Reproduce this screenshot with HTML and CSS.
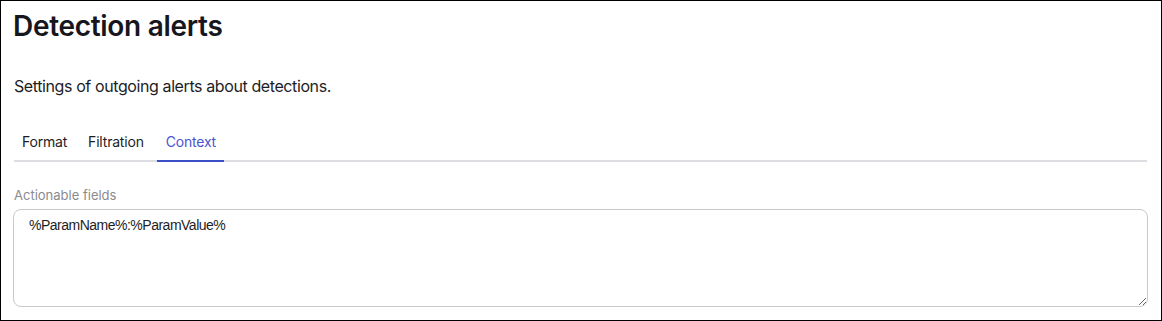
FILE: index.html
```html
<!DOCTYPE html>
<html lang="en">
<head>
<meta charset="utf-8">
<title>Detection alerts</title>
<link rel="stylesheet" href="styles.css">
</head>
<body>
<div class="page">
  <h1 class="title">Detection alerts</h1>
  <p class="subtitle">Settings of outgoing alerts about detections.</p>
  <nav class="tabs">
    <a class="tab">Format</a>
    <a class="tab">Filtration</a>
    <a class="tab tab-active">Context</a>
  </nav>
  <label class="field-label" for="fields">Actionable fields</label>
  <textarea id="fields" class="field-input">%ParamName%:%ParamValue%</textarea>
</div>
</body>
</html>
```
FILE: styles.css
```css
* { box-sizing: border-box; }
html, body { margin: 0; padding: 0; background: #fff; }
body { font-family: Inter, "Noto Sans", sans-serif; color: #1d1d25; }
.page {
  width: 1162px;
  height: 321px;
  border: 1px solid #000;
  padding: 7px 14px 0 12px;
  display: flex;
  flex-direction: column;
}
.title {
  margin: 0;
  font-size: 28px;
  line-height: 36px;
  font-weight: 600;
  letter-spacing: -0.3px;
  color: #16161e;
}
.subtitle {
  margin: 32px 0 0 1px;
  font-size: 16px;
  line-height: 20px;
  font-weight: 400;
  letter-spacing: -0.4px;
  color: #1d1d25;
}
.tabs {
  margin: 28px 0 0 1px;
  display: flex;
  gap: 5px;
  border-bottom: 2px solid #dcdde0;
  height: 38px;
}
.tab {
  padding: 8px 8px 0;
  font-size: 14px;
  line-height: 20px;
  letter-spacing: -0.2px;
  color: #1d1d25;
  margin-bottom: -2px;
  border-bottom: 2px solid transparent;
}
.tab-active {
  color: #4d53cf;
  border-bottom-color: #3c4fc6;
  padding-left: 9px;
}
.field-label {
  margin: 25px 0 0 1px;
  font-size: 13px;
  line-height: 16px;
  color: #8a8a8e;
}
.field-input {
  margin-top: 6px;
  width: 1135px;
  height: 98px;
  border: 1px solid #c8c9cc;
  border-radius: 8px;
  padding: 7px 15px;
  font-family: "Liberation Sans", Arial, sans-serif;
  font-size: 14px;
  line-height: 16px;
  letter-spacing: -0.5px;
  color: #1d1d25;
  resize: vertical;
  outline: none;
}
```
